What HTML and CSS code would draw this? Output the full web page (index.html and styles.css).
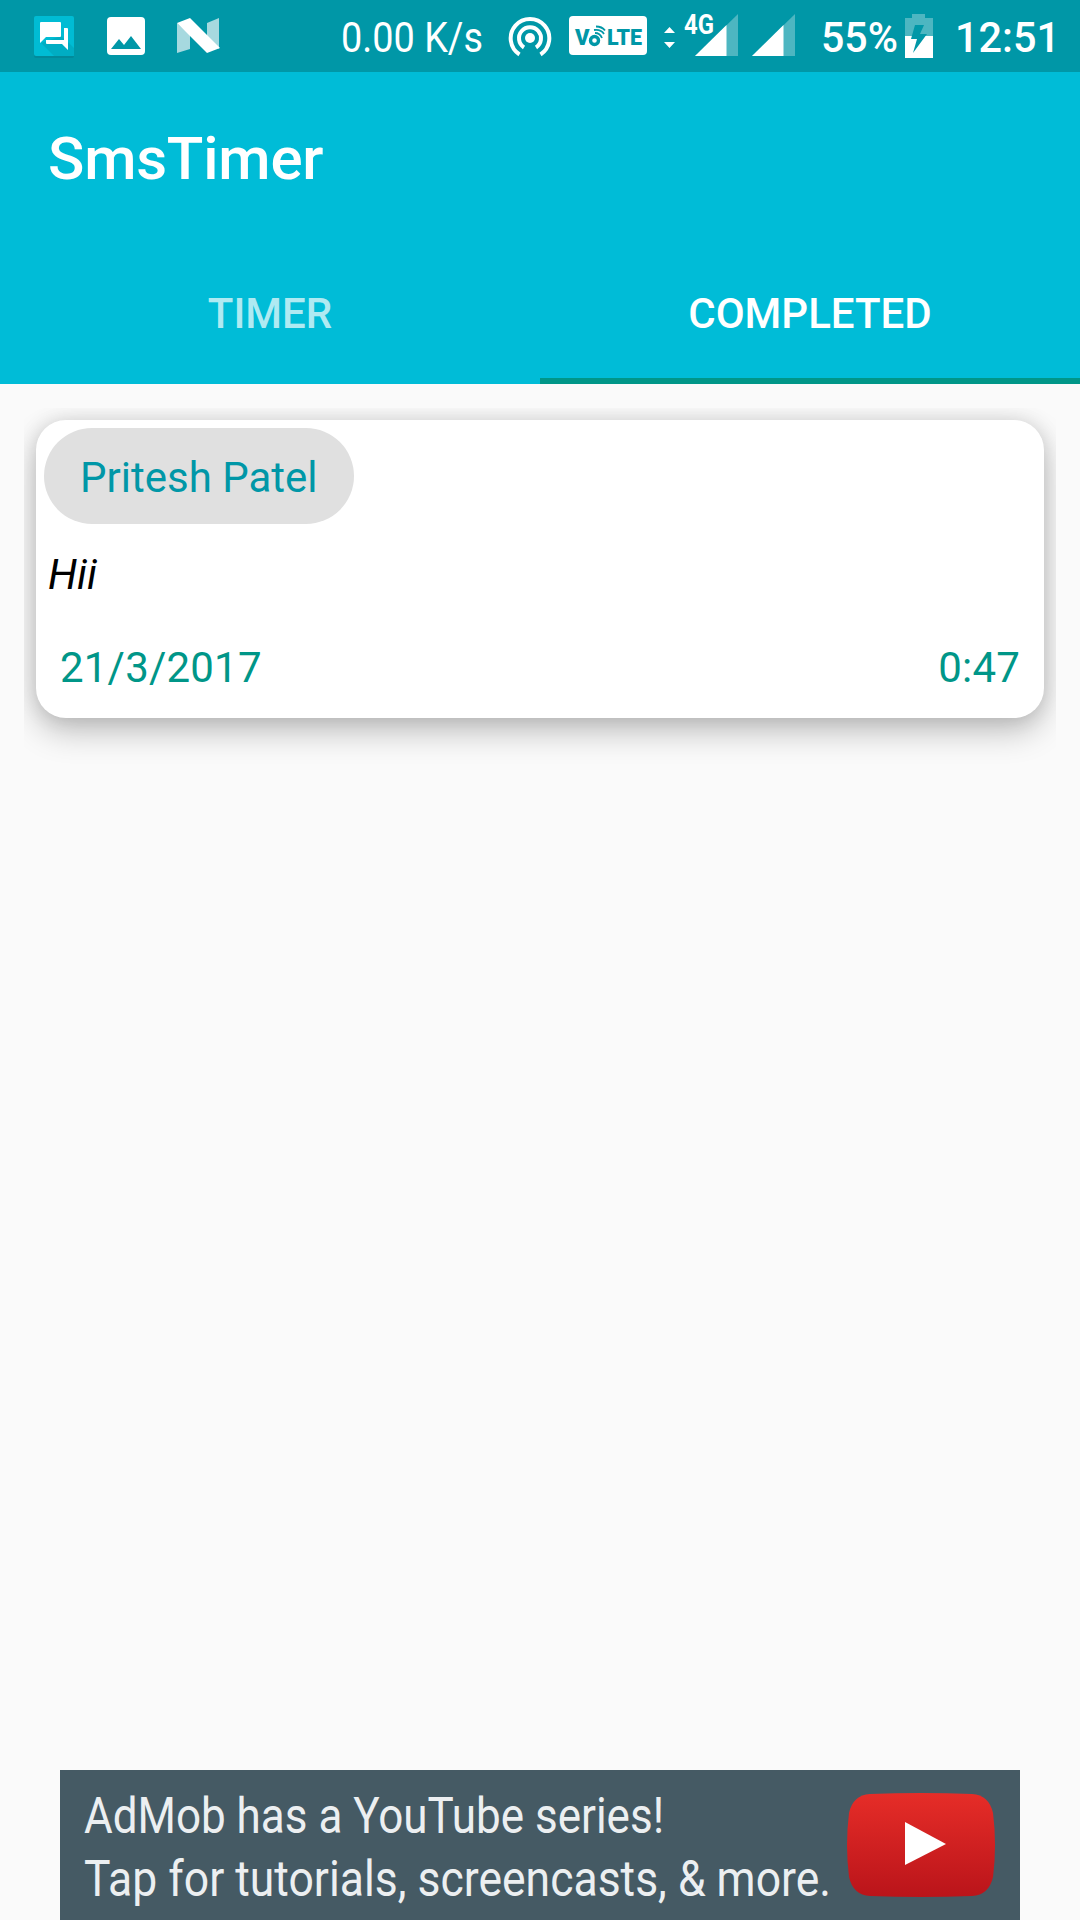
FILE: index.html
```html
<!DOCTYPE html>
<html lang="en">
<head>
    <meta charset="UTF-8">
    <title>SmsTimer</title>
    <link rel="stylesheet" href="styles.css">
</head>
<body>
    <div class="status-bar">
        <svg class="icon-chat" width="40" height="42" viewBox="0 0 40 42">
            <rect y="2" width="40" height="40" rx="2" fill="#028a9a"/>
            <rect width="40" height="40" rx="2" fill="#00bcd4"/>
            <path d="M7 27L20 40H40V32L34 26L27 20Z" fill="#00adc3"/>
            <path d="M7 6h19q1 0 1 1v13q0 1-1 1H12l-6 6V7q0-1 1-1z" fill="#fff"/>
            <path d="M30 12h3q1 0 1 1v21l-6-6H13q-1 0-1-1v-3h18z" fill="#fff"/>
        </svg>
        <svg class="icon-image" width="38" height="38" viewBox="0 0 38 38">
            <rect width="38" height="38" rx="4" fill="#fff"/>
            <path d="M4 32l8-10 5 6 7-9 10 13z" fill="#0097a7"/>
        </svg>
        <svg class="icon-n" width="43" height="36" viewBox="0 0 43 36">
            <path d="M0 5l13 12v14L0 35zM30 5l12-5v31L30 19z" fill="#a6d9df"/>
            <path d="M0 5L13 0l30 30-13 5z" fill="#fff"/>
        </svg>
        <svg class="speed" width="142" height="44" viewBox="0 0 142 44">
            <text x="0" y="38" textLength="142" lengthAdjust="spacingAndGlyphs">0.00 K/s</text>
        </svg>
        <svg class="icon-hotspot" width="44" height="42" viewBox="0 0 44 42">
            <circle cx="22" cy="22" r="5" fill="#fff"/>
            <path d="M16 31.5A11 11 0 1 1 28 31.5" fill="none" stroke="#fff" stroke-width="4"/>
            <path d="M11.5 38.5A19.3 19.3 0 1 1 32.500 38.500" fill="none" stroke="#fff" stroke-width="4"/>
        </svg>
        <svg class="icon-volte" width="78" height="39" viewBox="0 0 78 39">
            <rect width="78" height="39" rx="4" fill="#fff"/>
            <text x="6" y="29" font-size="22">V</text>
            <text x="38" y="29" font-size="22" textLength="35" lengthAdjust="spacingAndGlyphs">LTE</text>
            <circle cx="25.500" cy="24.500" r="4" fill="none" stroke="#0097a7" stroke-width="3.400"/>
            <path d="M26 17q5 0 7 5M25 14q7-1 10 4M27 10.500q6 0 9 4" fill="none" stroke="#0097a7" stroke-width="1.800"/>
        </svg>
        <svg class="icon-signal-4g" width="74" height="44" viewBox="0 0 74 44">
            <path d="M0 19l5.500-6 5.500 6zM0 28h11l-5.500 6z" fill="#fff"/>
            <path d="M74 0v42H31z" fill="#4db6c1"/>
            <path d="M62.500 11v31H31z" fill="#fff"/>
            <text x="20" y="20" textLength="30" lengthAdjust="spacingAndGlyphs">4G</text>
        </svg>
        <svg class="icon-signal" width="43" height="42" viewBox="0 0 43 42">
            <path d="M43 0v42H0z" fill="#4db6c1"/>
            <path d="M31.500 11v31H0z" fill="#fff"/>
        </svg>
        <svg class="battery-level" width="77" height="44" viewBox="0 0 77 44">
            <text x="0" y="38" textLength="77" lengthAdjust="spacingAndGlyphs">55%</text>
        </svg>
        <svg class="icon-battery" width="28" height="44" viewBox="0 0 28 44">
            <path d="M0 4h7V0h13v4h8v18H0z" fill="#4db6c1"/>
            <path d="M0 22h28v22H0z" fill="#fff"/>
            <path d="M10 11h9l-4 9h7L8 39l4-14H6z" fill="#0097a7"/>
        </svg>
        <svg class="clock" width="106" height="44" viewBox="0 0 106 44">
            <text x="0" y="38" textLength="105" lengthAdjust="spacingAndGlyphs">12:51</text>
        </svg>
    </div>

    <header class="app-bar">
        <h1>SmsTimer</h1>
        <nav class="tabs">
            <a class="tab">TIMER</a>
            <a class="tab active">COMPLETED</a>
        </nav>
    </header>

    <main class="content">
        <div class="card">
            <span class="chip">Pritesh Patel</span>
            <p class="message">Hii</p>
            <div class="card-footer">
                <span>21/3/2017</span>
                <span>0:47</span>
            </div>
        </div>
    </main>

    <footer class="ad">
        <svg class="ad-text" width="746" height="150" viewBox="0 0 746 150">
            <text x="-1" y="63" textLength="580" lengthAdjust="spacingAndGlyphs">AdMob has a YouTube series!</text>
            <text x="-1" y="126" textLength="747" lengthAdjust="spacingAndGlyphs">Tap for tutorials, screencasts, &amp; more.</text>
        </svg>
        <svg class="ad-play" width="150" height="104" viewBox="0 0 150 104">
            <defs>
                <linearGradient id="red" x1="0" y1="0" x2="0" y2="1">
                    <stop offset="0" stop-color="#e62d28"/>
                    <stop offset="1" stop-color="#ba141a"/>
                </linearGradient>
            </defs>
            <path d="M24 1Q75-1 126 1Q143 2 147 20Q151 52 147 84Q143 102 126 103Q75 105 24 103Q7 102 3 84Q-1 52 3 20Q7 2 24 1z" fill="url(#red)"/>
            <path d="M59 29v43l41-21z" fill="#fff"/>
        </svg>
    </footer>
</body>
</html>
```

FILE: styles.css
```css
body {
    margin: 0;
    height: 1920px;
    display: flex;
    flex-direction: column;
    overflow: hidden;
    font-family: Roboto, "Liberation Sans", sans-serif;
    font-size: 42px;
    background-color: #fafafa;
}
svg {
    display: block;
    flex: none;
    overflow: visible;
}
.status-bar {
    height: 58px;
    padding: 14px 0 0 34px;
    display: flex;
    align-items: flex-start;
    background-color: #0097a7;
    fill: #fff;
}
.icon-chat {
    margin-top: 2px;
}
.icon-image {
    margin: 3px 0 0 33px;
}
.icon-n {
    margin: 4px 0 0 32px;
}
.speed {
    margin-left: 121px;
}
.icon-hotspot {
    margin: 2px 0 0 25px;
}
.icon-volte {
    margin: 2px 0 0 17px;
    fill: #0097a7;
    font-weight: 900;
}
.icon-signal-4g {
    margin-left: 17px;
    font-size: 27px;
    font-weight: 700;
}
.icon-signal {
    margin-left: 14px;
}
.battery-level {
    margin-left: 26px;
    font-weight: 500;
}
.icon-battery {
    margin-left: 7px;
}
.clock {
    margin-left: 22px;
    font-weight: 500;
}
.app-bar {
    height: 312px;
    background-color: #00bcd7;
    color: #fff;
}
h1 {
    margin: 0;
    padding-left: 48px;
    height: 168px;
    line-height: 173px;
    font-size: 60px;
    font-weight: 500;
    letter-spacing: -0.2px;
}
.tabs {
    display: flex;
    height: 144px;
}
.tab {
    flex: 1;
    box-sizing: border-box;
    border-bottom: 6px solid transparent;
    line-height: 148px;
    text-align: center;
    font-weight: 500;
    color: rgba(255,255,255,0.7);
}
.tab.active {
    color: #fff;
    border-bottom-color: #009688;
}
.content {
    flex: 1;
    padding: 36px;
}
.card {
    height: 298px;
    box-sizing: border-box;
    padding: 8px;
    border-radius: 30px;
    background-color: #fff;
    box-shadow: 0 14px 32px rgba(0,0,0,0.23), 0 0 20px rgba(0,0,0,0.12);
    clip-path: inset(-12px -12px -60px -12px);
}
.chip {
    display: inline-block;
    height: 96px;
    line-height: 99px;
    padding: 0 36px;
    border-radius: 48px;
    background-color: #e0e0e0;
    color: #0097a7;
}
.message {
    margin: 24px 4px 0;
    line-height: 54px;
    font-style: italic;
    color: #000;
}
.card-footer {
    display: flex;
    justify-content: space-between;
    padding: 0 16px;
    margin-top: 39px;
    line-height: 54px;
    letter-spacing: 0.2px;
    color: #009688;
}
.ad {
    width: 960px;
    height: 150px;
    margin: 0 auto;
    display: flex;
    align-items: flex-start;
    background-color: #455a64;
}
.ad-text {
    margin-left: 25px;
    font-size: 50px;
    fill: #eceff1;
}
.ad-play {
    margin: 23px 0 0 15px;
}
```
